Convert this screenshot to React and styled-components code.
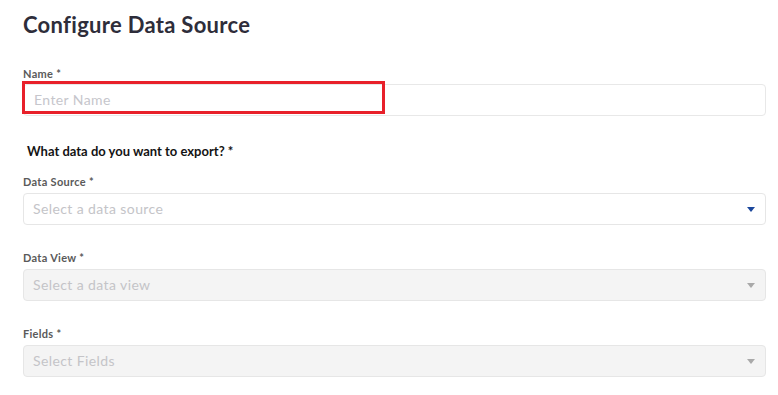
import styled, { createGlobalStyle } from "styled-components";

const GlobalStyle = createGlobalStyle`
  body {
    margin: 0;
    background: #fff;
    font-family: Lato, "Open Sans", sans-serif;
  }
`;

const Page = styled.div`
  padding: 10px 12px 0 23px;
`;

const Title = styled.h1`
  margin: 0;
  font-size: 22px;
  line-height: 30px;
  font-weight: 700;
  letter-spacing: 0.3px;
  color: #2e2d3a;
`;

const Field = styled.div`
  position: relative;
  margin-top: ${(p) => p.$top || 0}px;
`;

const Label = styled.label`
  display: block;
  font-size: 11px;
  line-height: 16px;
  font-weight: 700;
  letter-spacing: 0.3px;
  color: #5a5a5a;
  margin-bottom: ${(p) => p.$gap || 2}px;
`;

const SectionTitle = styled.h2`
  margin: 26px 0 0 4px;
  font-size: 13px;
  line-height: 18px;
  font-weight: 700;
  color: #141414;
`;

const TextInput = styled.input`
  box-sizing: border-box;
  display: block;
  width: 100%;
  height: 32px;
  padding: 0 10px 2px;
  border: 1px solid #e8e8e8;
  border-radius: 4px;
  font-family: inherit;
  font-size: 14px;
  letter-spacing: 0.4px;
  color: #333;
  background: #fff;
  outline: none;
  &::placeholder {
    color: #c6c6cc;
  }
`;

const Select = styled.div`
  box-sizing: border-box;
  display: flex;
  align-items: center;
  justify-content: space-between;
  height: 32px;
  padding: 0 10px 2px 9px;
  border: 1px solid #e6e6e6;
  border-radius: 4px;
  background: ${(p) => (p.$disabled ? "#f4f4f4" : "#fff")};
  font-size: 14px;
  letter-spacing: 0.4px;
  color: #c4c4c8;
`;

const Arrow = styled.span`
  width: 0;
  height: 0;
  margin-top: 2px;
  border-left: 4px solid transparent;
  border-right: 4px solid transparent;
  border-top: 5px solid ${(p) => (p.$disabled ? "#a9a9a9" : "#1b479c")};
`;

const Highlight = styled.div`
  position: absolute;
  left: -1px;
  top: 15px;
  width: 363px;
  height: 33px;
  box-sizing: border-box;
  border: 3px solid #e8202a;
  pointer-events: none;
`;

const SelectField = ({ label, placeholder, disabled, top }) => (
  <Field $top={top}>
    <Label $gap={3}>{label}</Label>
    <Select $disabled={disabled}>
      <span>{placeholder}</span>
      <Arrow $disabled={disabled} />
    </Select>
  </Field>
);

const App = () => {
  return (
    <>
      <GlobalStyle />
      <Page>
        <Title>Configure Data Source</Title>
        <Field $top={26}>
          <Label>Name *</Label>
          <TextInput placeholder="Enter Name" />
          <Highlight />
        </Field>
        <SectionTitle>What data do you want to export? *</SectionTitle>
        <SelectField
          top={14}
          label="Data Source *"
          placeholder="Select a data source"
        />
        <SelectField
          top={25}
          label="Data View *"
          placeholder="Select a data view"
          disabled
        />
        <SelectField
          top={25}
          label="Fields *"
          placeholder="Select Fields"
          disabled
        />
      </Page>
    </>
  );
};

export default App;
